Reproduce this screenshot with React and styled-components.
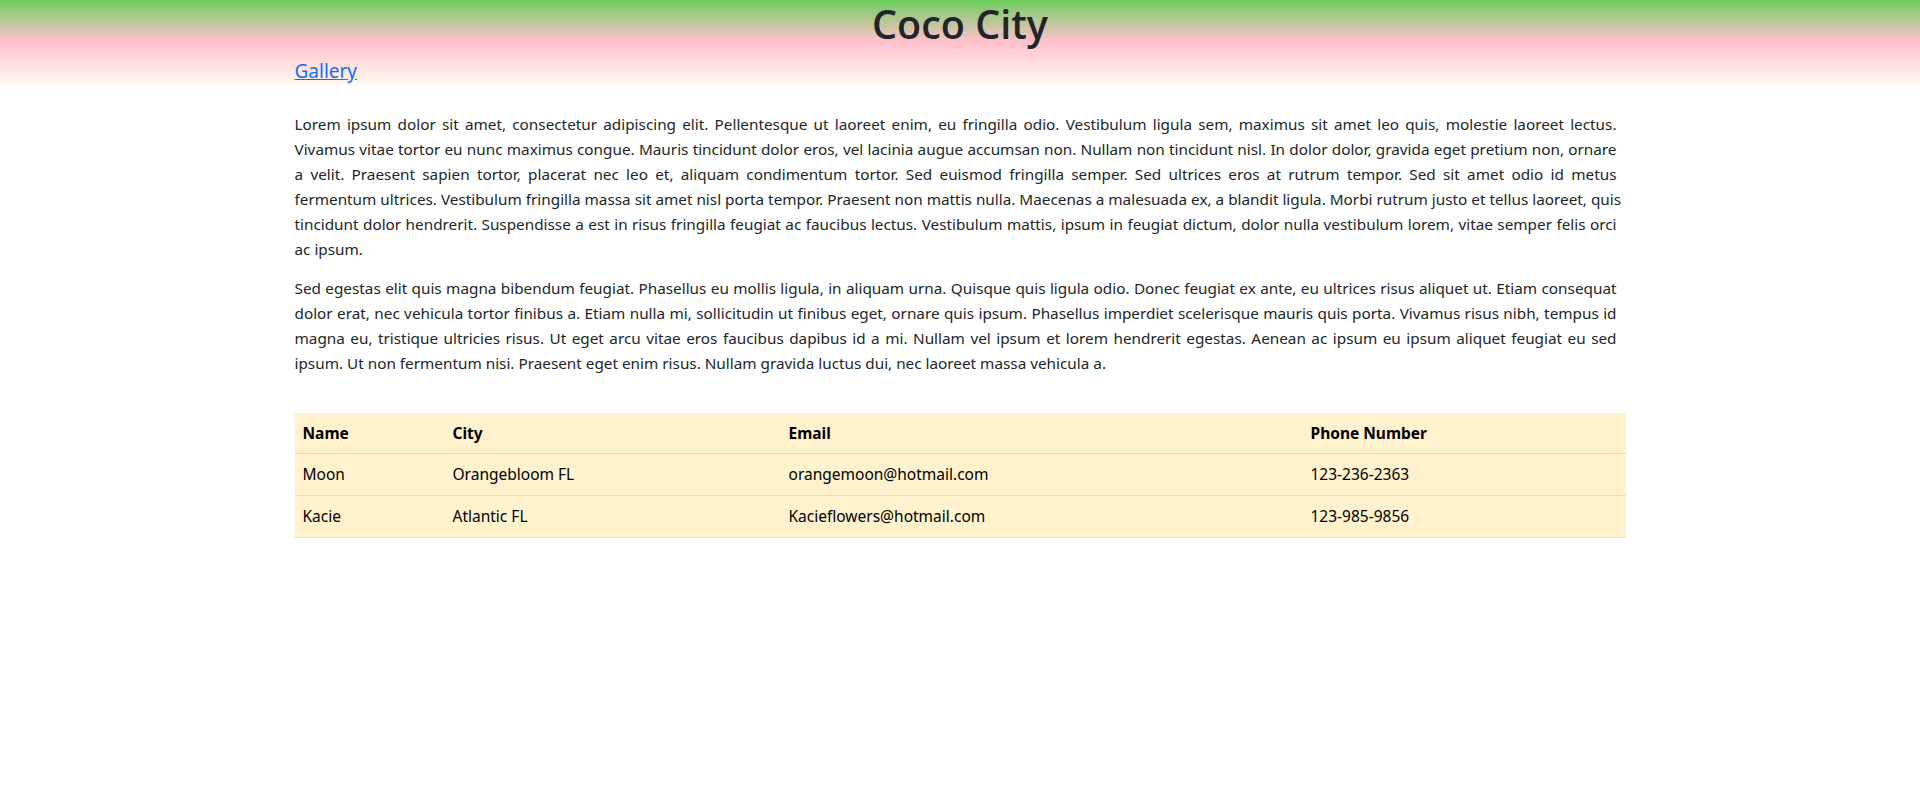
import React from "react";
import styled, { createGlobalStyle } from "styled-components";

const GlobalStyle = createGlobalStyle`
  html, body { margin: 0; padding: 0; background: #ffffff; }
  body {
    font-family: "Noto Sans", "Open Sans", Arial, sans-serif;
    font-size: 16px;
    color: #212529;
    -webkit-font-smoothing: antialiased;
  }
  * { box-sizing: border-box; }
`;

const Header = styled.header`
  height: 86px;
  background: linear-gradient(to bottom, #6dcf5e 0%, #ffc0cb 48%, #fffaf3 100%);
  display: flex;
  flex-direction: column;
`;

const Title = styled.h1`
  margin: 0;
  text-align: center;
  font-family: "Open Sans", "Noto Sans", Arial, sans-serif;
  font-size: 39.5px;
  font-weight: 600;
  line-height: 48px;
  color: #212529;
`;

const Container = styled.div`
  width: 1331px;
  margin: 0 auto;
`;

const NavRow = styled(Container)`
  margin-top: 11px;
`;

const NavLink = styled.a`
  font-size: 19px;
  line-height: 24px;
  color: #0d6efd;
  text-decoration: underline;
  cursor: pointer;
`;

const Main = styled(Container)`
  padding-top: 26px;
`;

const Paragraph = styled.p`
  margin: 0 0 15px;
  padding-right: 9px;
  font-size: 15.3px;
  line-height: 24.9px;
`;

const Line = styled.span`
  display: block;
  white-space: nowrap;
  text-align: ${(p) => (p.$fill ? "justify" : "left")};
  text-align-last: ${(p) => (p.$fill ? "justify" : "left")};
`;

const Table = styled.table`
  width: 100%;
  margin-top: 37px;
  border-collapse: collapse;
  background: #fff2cc;
  color: #000;
  font-size: 15.5px;
`;

const HeadCell = styled.th`
  text-align: left;
  font-weight: 700;
  padding: 8px;
  line-height: 24px;
  border-bottom: 1px solid #e2dbc5;
`;

const Cell = styled.td`
  padding: 8px;
  line-height: 25px;
  border-bottom: 1px solid #e2dbc5;
`;

const people = [
  { name: "Moon", city: "Orangebloom FL", email: "orangemoon@hotmail.com", phone: "123-236-2363" },
  { name: "Kacie", city: "Atlantic FL", email: "Kacieflowers@hotmail.com", phone: "123-985-9856" },
];

const paragraphs = [
  [
    "Lorem ipsum dolor sit amet, consectetur adipiscing elit. Pellentesque ut laoreet enim, eu fringilla odio. Vestibulum ligula sem, maximus sit amet leo quis, molestie laoreet lectus.",
    "Vivamus vitae tortor eu nunc maximus congue. Mauris tincidunt dolor eros, vel lacinia augue accumsan non. Nullam non tincidunt nisl. In dolor dolor, gravida eget pretium non, ornare",
    "a velit. Praesent sapien tortor, placerat nec leo et, aliquam condimentum tortor. Sed euismod fringilla semper. Sed ultrices eros at rutrum tempor. Sed sit amet odio id metus",
    "fermentum ultrices. Vestibulum fringilla massa sit amet nisl porta tempor. Praesent non mattis nulla. Maecenas a malesuada ex, a blandit ligula. Morbi rutrum justo et tellus laoreet, quis",
    "tincidunt dolor hendrerit. Suspendisse a est in risus fringilla feugiat ac faucibus lectus. Vestibulum mattis, ipsum in feugiat dictum, dolor nulla vestibulum lorem, vitae semper felis orci",
    "ac ipsum.",
  ],
  [
    "Sed egestas elit quis magna bibendum feugiat. Phasellus eu mollis ligula, in aliquam urna. Quisque quis ligula odio. Donec feugiat ex ante, eu ultrices risus aliquet ut. Etiam consequat",
    "dolor erat, nec vehicula tortor finibus a. Etiam nulla mi, sollicitudin ut finibus eget, ornare quis ipsum. Phasellus imperdiet scelerisque mauris quis porta. Vivamus risus nibh, tempus id",
    "magna eu, tristique ultricies risus. Ut eget arcu vitae eros faucibus dapibus id a mi. Nullam vel ipsum et lorem hendrerit egestas. Aenean ac ipsum eu ipsum aliquet feugiat eu sed",
    "ipsum. Ut non fermentum nisi. Praesent eget enim risus. Nullam gravida luctus dui, nec laoreet massa vehicula a.",
  ],
];

export default function App() {
  return (
    <>
      <GlobalStyle />
      <Header>
        <Title>Coco City</Title>
        <NavRow>
          <NavLink href="#gallery">Gallery</NavLink>
        </NavRow>
      </Header>
      <Main>
        {paragraphs.map((lines, i) => (
          <Paragraph key={i}>
            {lines.map((line, j) => (
              <Line key={j} $fill={j < lines.length - 1}>
                {line}{j < lines.length - 1 ? " " : ""}
              </Line>
            ))}
          </Paragraph>
        ))}
        <Table>
          <colgroup>
            <col style={{ width: "150px" }} />
            <col style={{ width: "336px" }} />
            <col style={{ width: "522px" }} />
            <col />
          </colgroup>
          <thead>
            <tr>
              <HeadCell>Name</HeadCell>
              <HeadCell>City</HeadCell>
              <HeadCell>Email</HeadCell>
              <HeadCell>Phone Number</HeadCell>
            </tr>
          </thead>
          <tbody>
            {people.map((p) => (
              <tr key={p.email}>
                <Cell>{p.name}</Cell>
                <Cell>{p.city}</Cell>
                <Cell>{p.email}</Cell>
                <Cell>{p.phone}</Cell>
              </tr>
            ))}
          </tbody>
        </Table>
      </Main>
    </>
  );
}
